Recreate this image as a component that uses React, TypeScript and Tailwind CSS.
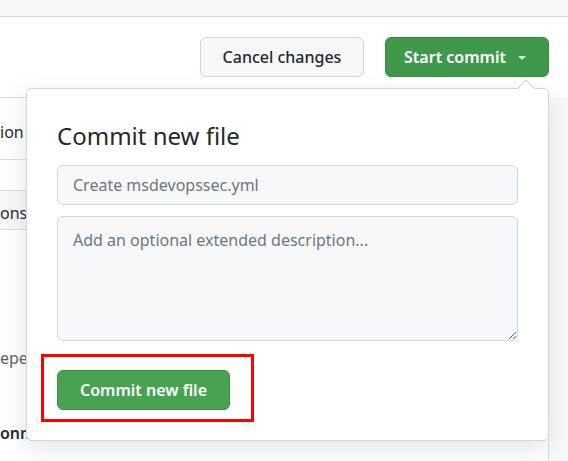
import React from 'react';

const font = { fontFamily: '"Noto Sans", "Liberation Sans", sans-serif' };

function Caret() {
  return (
    <svg viewBox="0 0 16 16" className="h-4 w-4 fill-white/80">
      <path d="m4.427 7.427 3.396 3.396a.25.25 0 0 0 .354 0l3.396-3.396A.25.25 0 0 0 11.396 7H4.604a.25.25 0 0 0-.177.427Z" />
    </svg>
  );
}

function CommitPopover() {
  return (
    <div className="absolute left-[26px] top-[88px] w-[523px] rounded-md border border-[#d0d7de] bg-white px-[30px] pt-[29px] pb-[30px] shadow-[0_8px_24px_rgba(140,149,159,0.25)]">
      <div className="absolute -top-[7px] right-[16px] h-3 w-3 rotate-45 border-l border-t border-[#d0d7de] bg-white" />
      <h2 className="mb-[11px] text-[24px] font-normal leading-[36px] text-[#24292f]">Commit new file</h2>
      <input
        className="block h-[40px] w-full rounded-md border border-[#d0d7de] bg-[#f6f8fa] px-[15px] text-[16px] text-[#24292f] outline-none placeholder:text-[#6e7781]"
        style={font}
        placeholder="Create msdevopssec.yml"
      />
      <textarea
        className="mt-[11px] block h-[125px] w-full rounded-md border border-[#d0d7de] bg-[#f6f8fa] px-[15px] py-[11px] text-[16px] leading-6 text-[#24292f] outline-none placeholder:text-[#6e7781]"
        style={font}
        placeholder="Add an optional extended description..."
      />
      <div className="relative mt-[29px] inline-block">
        <button className="h-[40px] w-[173px] rounded-md border border-[#3f8f46] bg-[#47a350] text-[16px] font-semibold text-white">
          Commit new file
        </button>
        <div className="pointer-events-none absolute -left-[16px] -top-[16px] h-[68px] w-[213px] border-[3px] border-[#ff0000]" />
      </div>
    </div>
  );
}

export default function App() {
  return (
    <div className="relative h-[461px] w-[568px] overflow-hidden bg-white" style={font}>
      <div className="h-[17px] border-b border-[#d0d7de] bg-[#f6f8fa]" />
      <div className="flex justify-end gap-[21px] pr-[19px] pt-[20px]">
        <button className="h-[40px] w-[164px] rounded-md border border-[#d0d7de] bg-[#f6f8fa] text-[16px] font-medium text-[#24292f]">
          Cancel changes
        </button>
        <button className="flex h-[40px] w-[164px] items-center justify-center gap-[8px] rounded-md border border-[#3a8a44] bg-[#3f994b] text-[16px] font-semibold text-white">
          Start commit
          <Caret />
        </button>
      </div>
      <div className="mt-[20px] flex">
        <div className="w-[549px] border-r border-t border-[#d8dee4] text-[16px] text-[#24292f]">
          <div className="flex h-[62px] items-center border-b border-[#d8dee4] pt-[6px]">
            <span>ion</span>
          </div>
          <div className="h-[31px] border-b border-[#d8dee4]" />
          <div className="flex h-[39px] items-center border-b border-[#d8dee4] bg-[#f6f8fa] pt-[6px]">
            <span>ons</span>
          </div>
          <div className="h-[116px]" />
          <div className="flex h-[24px] items-center">
            <span className="text-[#57606a]">epe</span>
          </div>
          <div className="h-[51px]" />
          <div className="flex h-[24px] items-center">
            <span className="font-semibold">onm</span>
          </div>
          <div className="h-[60px]" />
        </div>
        <div className="flex-1 bg-[#f8f9fa]" />
      </div>
      <CommitPopover />
    </div>
  );
}
